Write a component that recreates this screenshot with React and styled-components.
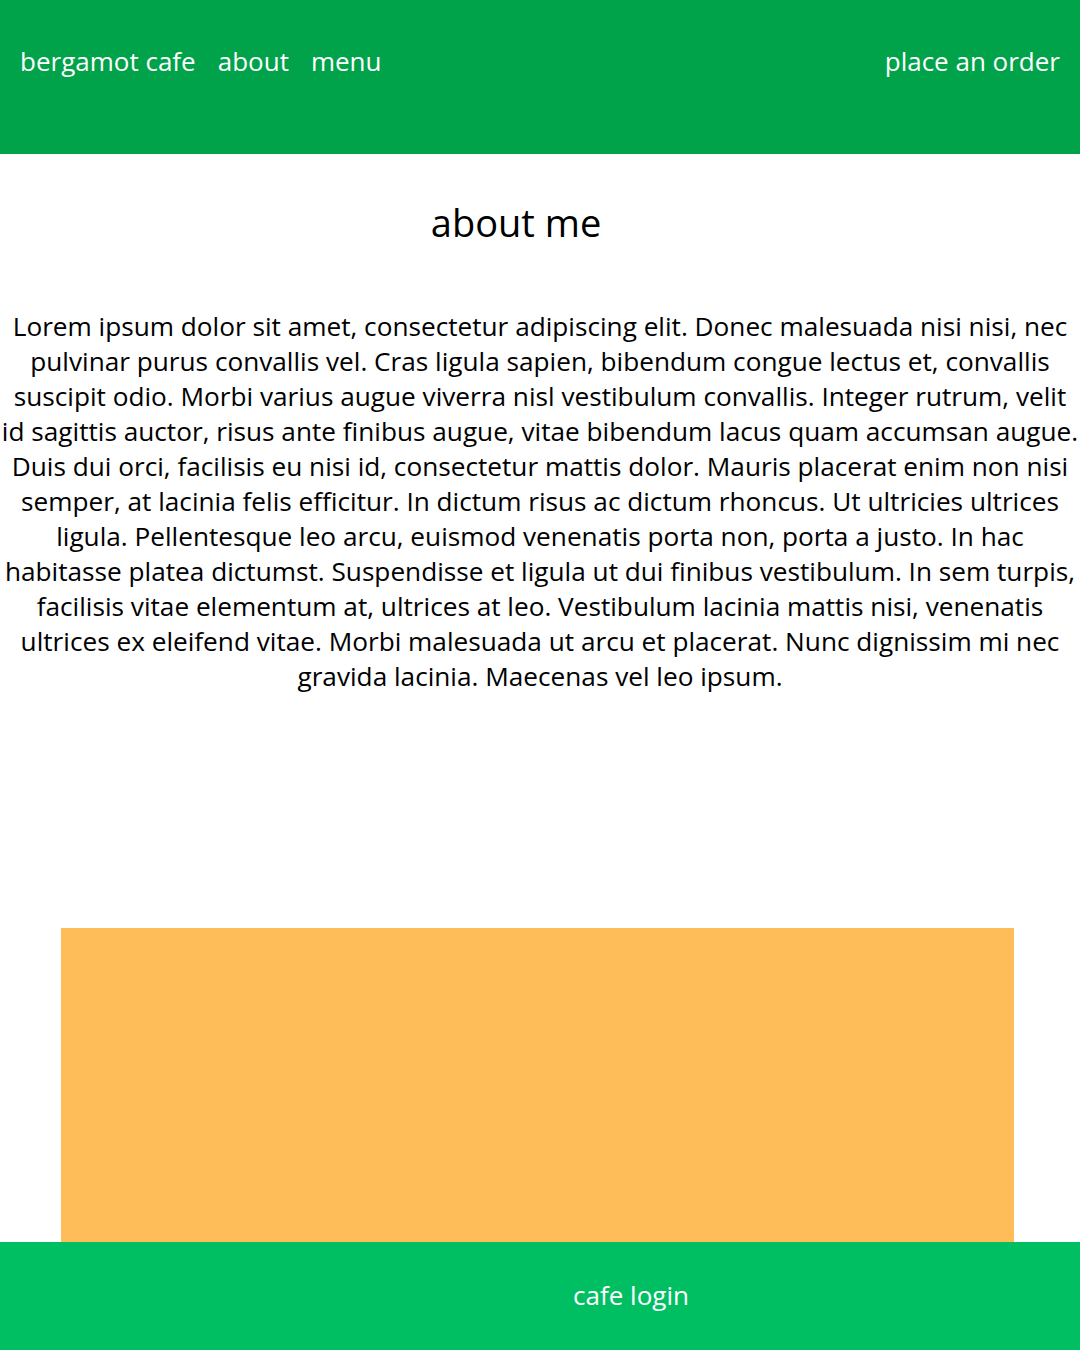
import React from "react";
import styled, { createGlobalStyle } from "styled-components";

const Global = createGlobalStyle`
  html, body { margin: 0; padding: 0; background: #fff; }
  body { font-family: "Open Sans", "Noto Sans", sans-serif; }
`;

const Page = styled.div`
  width: 1080px;
  height: 1350px;
  display: flex;
  flex-direction: column;
  overflow: hidden;
`;

const Header = styled.header`
  height: 154px;
  background: #00a34a;
  display: flex;
  justify-content: space-between;
  align-items: flex-start;
  padding: 43px 20px 0 20px;
  box-sizing: border-box;
`;

const Nav = styled.nav`
  display: flex;
  gap: 22px;
`;

const NavLink = styled.a`
  color: #fff;
  font-size: 26px;
  line-height: 36px;
  text-decoration: none;
`;

const Main = styled.main`
  flex: 1;
  display: flex;
  flex-direction: column;
  align-items: center;
`;

const Title = styled.h1`
  margin: 42px 0 0 0;
  font-weight: 400;
  font-size: 38px;
  line-height: 52px;
  color: #000;
  transform: translateX(-24px);
`;

const Paragraph = styled.p`
  margin: 61px 0 0 0;
  width: 1080px;
  text-align: center;
  font-size: 26.2px;
  line-height: 35px;
  color: #000;
`;

const Line = styled.span`
  display: block;
  white-space: nowrap;
`;

const Banner = styled.div`
  margin-top: auto;
  width: 953px;
  height: 314px;
  background: #ffbd59;
  align-self: flex-start;
  margin-left: 61px;
`;

const Footer = styled.footer`
  height: 108px;
  background: #00bf63;
  display: flex;
  align-items: center;
  justify-content: center;
  padding-left: 182px;
  padding-bottom: 2px;
  box-sizing: border-box;
`;

const FooterLink = styled.a`
  color: #fff;
  font-size: 26px;
  line-height: 36px;
  text-decoration: none;
`;

const lines = [
  "Lorem ipsum dolor sit amet, consectetur adipiscing elit. Donec malesuada nisi nisi, nec",
  "pulvinar purus convallis vel. Cras ligula sapien, bibendum congue lectus et, convallis",
  "suscipit odio. Morbi varius augue viverra nisl vestibulum convallis. Integer rutrum, velit",
  "id sagittis auctor, risus ante finibus augue, vitae bibendum lacus quam accumsan augue.",
  "Duis dui orci, facilisis eu nisi id, consectetur mattis dolor. Mauris placerat enim non nisi",
  "semper, at lacinia felis efficitur. In dictum risus ac dictum rhoncus. Ut ultricies ultrices",
  "ligula. Pellentesque leo arcu, euismod venenatis porta non, porta a justo. In hac",
  "habitasse platea dictumst. Suspendisse et ligula ut dui finibus vestibulum. In sem turpis,",
  "facilisis vitae elementum at, ultrices at leo. Vestibulum lacinia mattis nisi, venenatis",
  "ultrices ex eleifend vitae. Morbi malesuada ut arcu et placerat. Nunc dignissim mi nec",
  "gravida lacinia. Maecenas vel leo ipsum.",
];

export default function App() {
  return (
    <Page>
      <Global />
      <Header>
        <Nav>
          <NavLink>bergamot cafe</NavLink>
          <NavLink>about</NavLink>
          <NavLink>menu</NavLink>
        </Nav>
        <NavLink>place an order</NavLink>
      </Header>
      <Main>
        <Title>about me</Title>
        <Paragraph>
          {lines.map((l, i) => (
            <Line key={i}>{l}</Line>
          ))}
        </Paragraph>
        <Banner />
      </Main>
      <Footer>
        <FooterLink>cafe login</FooterLink>
      </Footer>
    </Page>
  );
}
